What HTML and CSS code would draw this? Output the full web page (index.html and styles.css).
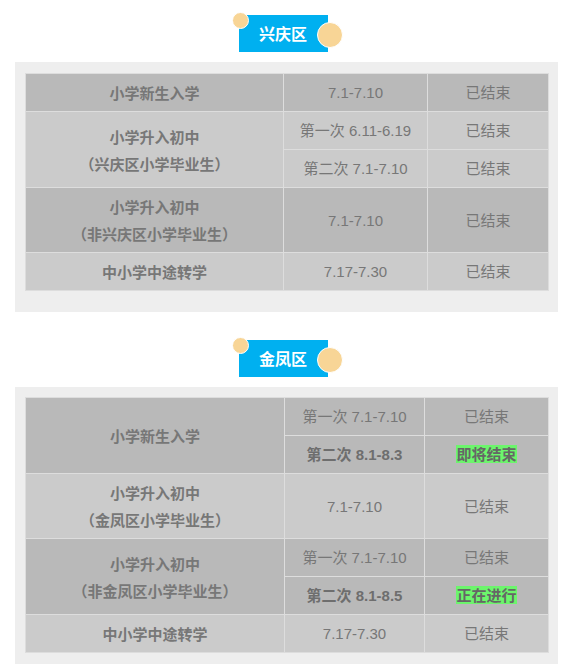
FILE: index.html
```html
<!DOCTYPE html>
<html lang="zh">
<head>
<meta charset="utf-8">
<title>招生时间</title>
<link rel="stylesheet" href="styles.css">
</head>
<body>
<section class="district first">
  <div class="badge-wrap">
    <div class="badge">
      <span class="dot-small"></span>
      <div class="badge-label">兴庆区</div>
      <span class="dot-big"></span>
    </div>
  </div>
  <div class="panel panel-a">
    <table class="sched">
      <colgroup><col class="c1a"><col class="c2a"><col class="c3a"></colgroup>
      <tr class="dark">
        <td class="name">小学新生入学</td><td>7.1-7.10</td><td>已结束</td>
      </tr>
      <tr class="light">
        <td class="name" rowspan="2">小学升入初中<br>（兴庆区小学毕业生）</td><td>第一次 6.11-6.19</td><td>已结束</td>
      </tr>
      <tr class="light">
        <td>第二次 7.1-7.10</td><td>已结束</td>
      </tr>
      <tr class="dark">
        <td class="name">小学升入初中<br>（非兴庆区小学毕业生）</td><td>7.1-7.10</td><td>已结束</td>
      </tr>
      <tr class="light">
        <td class="name">中小学中途转学</td><td>7.17-7.30</td><td>已结束</td>
      </tr>
    </table>
  </div>
</section>

<section class="district second">
  <div class="badge-wrap">
    <div class="badge">
      <span class="dot-small"></span>
      <div class="badge-label">金凤区</div>
      <span class="dot-big"></span>
    </div>
  </div>
  <div class="panel panel-b">
    <table class="sched">
      <colgroup><col class="c1b"><col class="c2b"><col class="c3b"></colgroup>
      <tr class="dark">
        <td class="name" rowspan="2">小学新生入学</td><td>第一次 7.1-7.10</td><td>已结束</td>
      </tr>
      <tr class="dark">
        <td class="strong">第二次 8.1-8.3</td><td><span class="hl">即将结束</span></td>
      </tr>
      <tr class="light">
        <td class="name">小学升入初中<br>（金凤区小学毕业生）</td><td>7.1-7.10</td><td>已结束</td>
      </tr>
      <tr class="dark">
        <td class="name" rowspan="2">小学升入初中<br>（非金凤区小学毕业生）</td><td>第一次 7.1-7.10</td><td>已结束</td>
      </tr>
      <tr class="dark">
        <td class="strong">第二次 8.1-8.5</td><td><span class="hl">正在进行</span></td>
      </tr>
      <tr class="light">
        <td class="name">中小学中途转学</td><td>7.17-7.30</td><td>已结束</td>
      </tr>
    </table>
  </div>
</section>
</body>
</html>
```

FILE: styles.css
```css
html, body {
  margin: 0;
  padding: 0;
  background: #ffffff;
}

body {
  padding: 12px 15px 0;
  font-family: "Liberation Sans", "Noto Sans CJK SC", sans-serif;
  color: #777777;
}

.second {
  margin-top: 25px;
}

.badge-wrap {
  display: flex;
  justify-content: center;
}

.badge {
  position: relative;
  width: 110px;
  height: 40px;
}

.badge-label {
  margin: 3px 0 0 7px;
  width: 89px;
  height: 37px;
  background: #00b0f0;
  color: #ffffff;
  font-family: "Noto Sans CJK SC", sans-serif;
  font-size: 16px;
  font-weight: bold;
  line-height: 37px;
  text-align: center;
  letter-spacing: 0;
}

.dot-small,
.dot-big {
  position: absolute;
  box-sizing: border-box;
  border-radius: 50%;
  background: #f8d596;
  border: 1px solid #ffffff;
}

.dot-small {
  left: 0;
  top: 0;
  width: 17px;
  height: 17px;
}

.dot-big {
  left: 85px;
  top: 10px;
  width: 26px;
  height: 26px;
}

.panel {
  margin-top: 10px;
  background: #eeeeee;
  padding: 11px 10px 21px;
}

.panel-b {
  padding: 10px 10px 11px;
}

.sched {
  width: 100%;
  border-collapse: collapse;
  table-layout: fixed;
  font-size: 15px;
}

.c1a { width: 258px; }
.c2a { width: 144px; }
.c3a { width: 121px; }
.c1b { width: 259px; }
.c2b { width: 140px; }
.c3b { width: 124px; }

.sched td {
  border: 1px solid #dddddd;
  padding: 5px 0;
  line-height: 27px;
  text-align: center;
  vertical-align: middle;
  white-space: nowrap;
}

.dark td {
  background: #b9b9b9;
}

.light td {
  background: #cbcbcb;
}

.sched td.name {
  font-family: "Noto Sans CJK SC", sans-serif;
  font-weight: bold;
  color: #777777;
}

.sched td.strong {
  font-weight: bold;
  color: #6e6e6e;
}

.hl {
  display: inline-block;
  background: #6cf56c;
  color: #666666;
  font-family: "Noto Sans CJK SC", sans-serif;
  font-weight: bold;
  line-height: 18px;
}
```
